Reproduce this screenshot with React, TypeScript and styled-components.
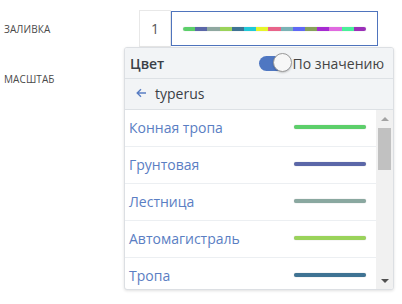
import React from "react";
import styled, { createGlobalStyle } from "styled-components";

const Global = createGlobalStyle`
  html, body { margin: 0; padding: 0; background: #fff; }
  body { font-family: "Open Sans", "Noto Sans", sans-serif; }
`;

const Page = styled.div`
  box-sizing: border-box;
  min-height: 304px;
  padding: 10px 0 0 4px;
  display: flex;
  flex-direction: column;
  gap: 13px;
`;

const Row = styled.div`
  display: flex;
  align-items: center;
  height: 37px;
`;

const Label = styled.div`
  width: 135px;
  font-size: 10px;
  color: #4a4a4a;
  text-transform: uppercase;
  letter-spacing: 0.1px;
`;

const Control = styled.div`
  position: relative;
  z-index: 2;
  display: flex;
  height: 37px;
`;

const NumBox = styled.div`
  width: 30px;
  height: 35px;
  border: 1px solid #e8e8e8;
  display: flex;
  align-items: center;
  justify-content: center;
  font-size: 14px;
  color: #555;
`;

const RampBox = styled.div`
  margin-top: 1px;
  width: 205px;
  height: 33px;
  border: 1px solid #4f74bd;
  display: flex;
  align-items: center;
  justify-content: center;
`;

const Ramp = styled.div`
  display: flex;
  width: 183px;
  height: 4px;
  border-radius: 2px;
  overflow: hidden;
  box-shadow: 0 0 1px rgba(0,0,0,0.3);
`;

const Seg = styled.div<{ $c: string }>`
  flex: 1;
  background: ${(p) => p.$c};
`;

const Dropdown = styled.div`
  position: absolute;
  left: -15px;
  top: 37px;
  width: 268px;
  height: 241px;
  border: 1px solid #dcdfe3;
  border-radius: 3px;
  background: #fff;
  box-shadow: 0 1px 3px rgba(0,0,0,0.12);
  display: flex;
  flex-direction: column;
  overflow: hidden;
`;

const Header = styled.div`
  height: 30px;
  flex: none;
  background: #f2f4f6;
  border-bottom: 1px solid #dde1e5;
  display: flex;
  align-items: center;
  justify-content: space-between;
  padding: 0 9px 0 5px;
`;

const Title = styled.div`
  font-size: 14px;
  font-weight: 600;
  color: #3a3f47;
`;

const ToggleWrap = styled.div`
  display: flex;
  align-items: center;
  gap: 2px;
  font-size: 14px;
  color: #444;
`;

const Track = styled.div`
  position: relative;
  width: 32px;
  height: 15px;
  border-radius: 8px;
  background: #4f77c2;
  margin-top: 1px;
`;

const Knob = styled.div`
  position: absolute;
  right: -1px;
  top: -3px;
  width: 19px;
  height: 19px;
  border-radius: 50%;
  background: #f7f7f7;
  border: 1px solid #9a9a9a;
  box-sizing: border-box;
  box-shadow: 0 1px 2px rgba(0,0,0,0.2);
`;

const BackRow = styled.div`
  height: 31px;
  flex: none;
  background: #f2f4f6;
  border-bottom: 1px solid #dde1e5;
  display: flex;
  align-items: center;
  padding: 0 0 2px 11px;
  box-sizing: border-box;
  gap: 8px;
  font-size: 14px;
  color: #3a3f47;
`;

const Body = styled.div`
  flex: 1;
  display: flex;
  min-height: 0;
`;

const List = styled.div`
  flex: 1;
  display: flex;
  flex-direction: column;
  overflow: hidden;
`;

const Item = styled.div`
  height: 37px;
  flex: none;
  box-sizing: border-box;
  border-bottom: 1px solid #eceff2;
  display: flex;
  align-items: center;
  justify-content: space-between;
  padding: 0 10px 2px 4px;
  font-size: 14px;
  color: #5a7ec3;
`;

const Bar = styled.div<{ $c: string }>`
  width: 72px;
  height: 4px;
  border-radius: 2px;
  background: ${(p) => p.$c};
  box-shadow: 0 0 1px rgba(0,0,0,0.35);
`;

const Scrollbar = styled.div`
  width: 17px;
  flex: none;
  background: #f1f1f1;
  display: flex;
  flex-direction: column;
  align-items: center;
`;

const Arrow = styled.div<{ $down?: boolean }>`
  height: 17px;
  flex: none;
  display: flex;
  align-items: center;
  justify-content: center;
  width: 100%;
  &::after {
    content: "";
    border-left: 4px solid transparent;
    border-right: 4px solid transparent;
    ${(p) =>
      p.$down
        ? "border-top: 4px solid #505050;"
        : "border-bottom: 4px solid #a3a3a3;"}
  }
`;

const Thumb = styled.div`
  width: 13px;
  height: 42px;
  background: #c1c1c1;
  margin-top: 1px;
`;

const Spacer = styled.div`
  flex: 1;
`;

const rampColors = [
  "#5ccf6a", "#5b67a8", "#8fa8a0", "#9ad35a", "#3f7393",
  "#20c9d8", "#e6f52a", "#e8648a", "#7ab2b5", "#5f68f5",
  "#87a15a", "#a62bd1", "#e06ae0", "#49f09a", "#9a2fb8",
];

const items = [
  { name: "Конная тропа", c: "#5ccf6a" },
  { name: "Грунтовая", c: "#5b67a8" },
  { name: "Лестница", c: "#8aa8a0" },
  { name: "Автомагистраль", c: "#9ad35a" },
  { name: "Тропа", c: "#3f7393" },
];

export default function App() {
  return (
    <>
      <Global />
      <Page>
        <Row>
          <Label>Заливка</Label>
          <Control>
            <NumBox>1</NumBox>
            <RampBox>
              <Ramp>
                {rampColors.map((c, i) => (
                  <Seg key={i} $c={c} />
                ))}
              </Ramp>
            </RampBox>
            <Dropdown>
              <Header>
                <Title>Цвет</Title>
                <ToggleWrap>
                  <Track>
                    <Knob />
                  </Track>
                  <span>По значению</span>
                </ToggleWrap>
              </Header>
              <BackRow>
                <svg width="11" height="10" viewBox="0 0 11 10">
                  <path d="M10 5H1.5M5 1.2L1.2 5L5 8.8" fill="none" stroke="#5a7ec3" strokeWidth="1.4" />
                </svg>
                <span>typerus</span>
              </BackRow>
              <Body>
                <List>
                  {items.map((it) => (
                    <Item key={it.name}>
                      <span>{it.name}</span>
                      <Bar $c={it.c} />
                    </Item>
                  ))}
                </List>
                <Scrollbar>
                  <Arrow />
                  <Thumb />
                  <Spacer />
                  <Arrow $down />
                </Scrollbar>
              </Body>
            </Dropdown>
          </Control>
        </Row>
        <Row>
          <Label>Масштаб</Label>
        </Row>
      </Page>
    </>
  );
}
